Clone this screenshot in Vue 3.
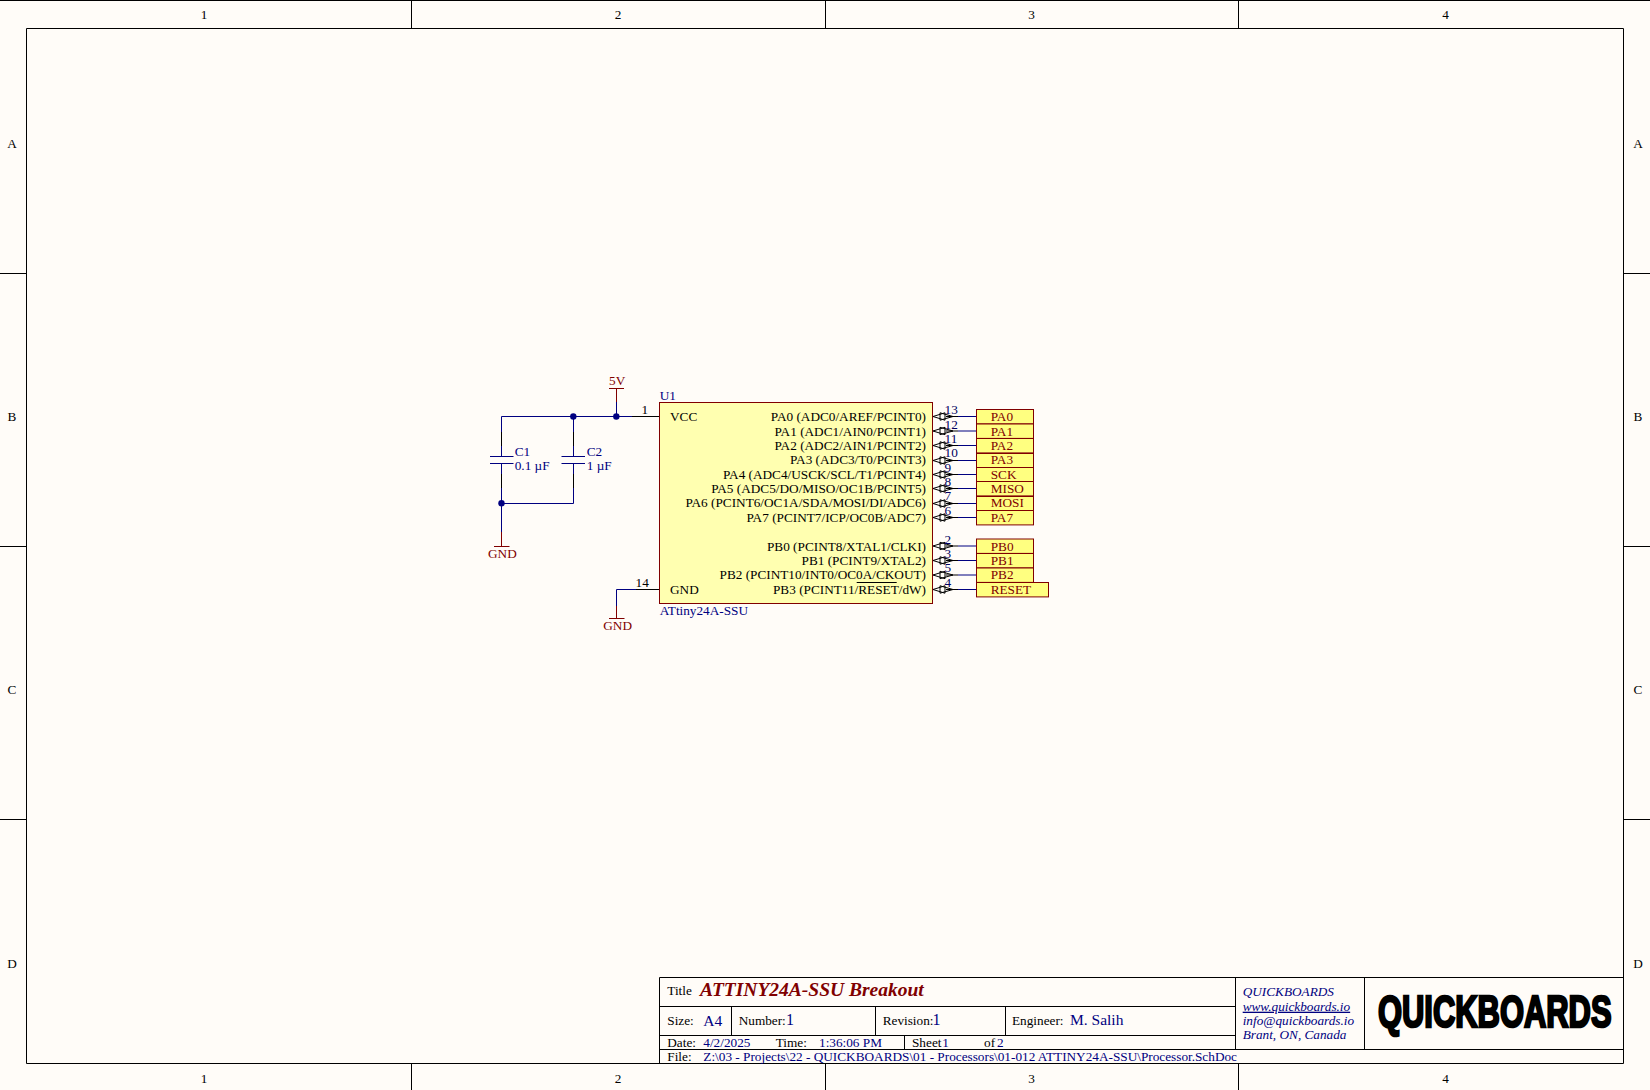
<template>
  <div class="sheet">
    <svg class="canvas" width="1650" height="1090" viewBox="0 0 1650 1090">
      <!-- sheet frame -->
      <path class="frame" d="M0 0.5H1650M26.5 28.5H1623.5V1063.5H26.5Z" />
      <path class="frame" d="M411.5 1V28M825.5 1V28M1238.5 1V28M411.5 1063V1090M825.5 1063V1090M1238.5 1063V1090" />
      <path class="frame" d="M0 273.5H26M0 546.5H26M0 819.5H26M1624 273.5H1650M1624 546.5H1650M1624 819.5H1650" />
      <g class="ref">
        <template v-for="c in cols" :key="c.n">
          <text :x="c.x" y="18.5">{{ c.n }}</text>
          <text :x="c.x" y="1082.5">{{ c.n }}</text>
        </template>
        <template v-for="r in rows" :key="r.n">
          <text x="12" :y="r.y">{{ r.n }}</text>
          <text x="1638" :y="r.y">{{ r.n }}</text>
        </template>
      </g>

      <!-- wires -->
      <path class="wire" d="M632 416.5H501.5V456.5M573.5 416.5V456.5M616.5 416.5V396M501.5 463.5V532M573.5 463.5V503.5H501.5M659 589.5H616.5V606" />
      <path class="pin" d="M501.5 432V446M573.5 432V446M501.5 474V488M573.5 474V488" />
      <path class="cap" d="M490 456.5H513.5M490 463.5H513.5M561.5 456.5H585M561.5 463.5H585" />
      <circle class="dot" cx="573.3" cy="416.5" r="3.2" />
      <circle class="dot" cx="616.3" cy="416.5" r="3.2" />
      <circle class="dot" cx="501.5" cy="503.3" r="3.2" />

      <!-- power ports -->
      <path class="power" d="M609 388.5H624M616.5 388.5V402M494 546.5H509.5M501.5 532V546.5M609 618.5H624.5M616.5 606V618.5" />
      <text class="t power-t" x="609" y="385">5V</text>
      <text class="t power-t" x="488" y="558">GND</text>
      <text class="t power-t" x="603.3" y="630">GND</text>

      <text class="t des" x="514.7" y="456">C1</text>
      <text class="t des" x="514.7" y="470">0.1 µF</text>
      <text class="t des" x="586.7" y="456">C2</text>
      <text class="t des" x="586.7" y="470">1 µF</text>

      <!-- U1 -->
      <rect class="chip" x="659.5" y="402.5" width="273" height="201" />
      <path class="pin" d="M632 416.5H659M636 589.5H659" />
      <text class="t des" x="659.7" y="400">U1</text>
      <text class="t des" x="659.7" y="615">ATtiny24A-SSU</text>
      <text class="t" x="641.5" y="414">1</text>
      <text class="t" x="635.5" y="586.5">14</text>
      <text class="t" x="670" y="421">VCC</text>
      <text class="t" x="670" y="594">GND</text>

      <g v-for="p in pins" :key="p.num">
        <path class="wire" :d="`M958 ${p.y}H977`" />
        <path class="pin" :d="`M946 ${p.y}H958`" />
        <path class="io" :d="`M933 ${p.y}L945 ${p.y - 3.7}V${p.y + 3.7}ZM953 ${p.y}L940 ${p.y - 3.7}V${p.y + 3.7}Z`" />
        <text class="t pname" x="926" :y="p.b">{{ p.name }}</text>
        <text class="t pnum" x="944.5" :y="p.b - 7">{{ p.num }}</text>
        <rect class="port" x="976.5" :y="p.y - 7" :width="p.w" height="14.4" />
        <text class="t port-t" x="990.7" :y="p.b">{{ p.port }}</text>
      </g>
      <path class="pin" d="M856.7 582.5H896.7" />

      <!-- title block -->
      <path class="frame" d="M659.5 1063V977.5H1623M659.5 1006.5H1235M659.5 1035.5H1235M659.5 1049.5H1623M731.5 1006.5V1035.5M875.5 1006.5V1035.5M1005.5 1006.5V1035.5M904.5 1035.5V1049.5M1235.5 977.5V1049.5M1364.5 977.5V1049.5" />
      <text class="t" x="667.3" y="995.3">Title</text>
      <text class="title" x="700" y="996">ATTINY24A-SSU Breakout</text>
      <text class="t" x="667.3" y="1025">Size:</text>
      <text class="val big" x="703.3" y="1025.5">A4</text>
      <text class="t" x="738.7" y="1025">Number:</text>
      <text class="val" x="786" y="1025">1</text>
      <text class="t" x="882.7" y="1025">Revision:</text>
      <text class="val" x="932.5" y="1025">1</text>
      <text class="t" x="1012" y="1025">Engineer:</text>
      <text class="val big" x="1070" y="1025">M. Salih</text>
      <text class="t" x="667.3" y="1047">Date:</text>
      <text class="t des" x="703.3" y="1047">4/2/2025</text>
      <text class="t" x="775.7" y="1047">Time:</text>
      <text class="t des" x="819" y="1047">1:36:06 PM</text>
      <text class="t" x="912" y="1047">Sheet</text>
      <text class="t des" x="942.3" y="1047">1</text>
      <text class="t" x="984" y="1047">of</text>
      <text class="t des" x="997" y="1047">2</text>
      <text class="t" x="667.3" y="1060.5">File:</text>
      <text class="t des" x="703.3" y="1060.5">Z:\03 - Projects\22 - QUICKBOARDS\01 - Processors\01-012 ATTINY24A-SSU\Processor.SchDoc</text>
      <text class="t addr" x="1242.7" y="995.7">QUICKBOARDS</text>
      <text class="t addr link" x="1242.7" y="1010.7">www.quickboards.io</text>
      <text class="t addr" x="1242.7" y="1024.6">info@quickboards.io</text>
      <text class="t addr" x="1242.7" y="1038.5">Brant, ON, Canada</text>
      <text class="logo" transform="translate(1378 1027) scale(0.687 1)">QUICKBOARDS</text>
    </svg>
  </div>
</template>

<script setup>
const cols = [
  { n: '1', x: 204 },
  { n: '2', x: 618 },
  { n: '3', x: 1031.5 },
  { n: '4', x: 1445.5 }
]
const rows = [
  { n: 'A', y: 148 },
  { n: 'B', y: 421 },
  { n: 'C', y: 694 },
  { n: 'D', y: 968 }
]
const pins = [
  { y: 416.5, b: 421, num: '13', port: 'PA0', w: 57, name: 'PA0 (ADC0/AREF/PCINT0)' },
  { y: 431, b: 436, num: '12', port: 'PA1', w: 57, name: 'PA1 (ADC1/AIN0/PCINT1)' },
  { y: 445.5, b: 450, num: '11', port: 'PA2', w: 57, name: 'PA2 (ADC2/AIN1/PCINT2)' },
  { y: 460.5, b: 464, num: '10', port: 'PA3', w: 57, name: 'PA3 (ADC3/T0/PCINT3)' },
  { y: 474.5, b: 479, num: '9', port: 'SCK', w: 57, name: 'PA4 (ADC4/USCK/SCL/T1/PCINT4)' },
  { y: 488.5, b: 493, num: '8', port: 'MISO', w: 57, name: 'PA5 (ADC5/DO/MISO/OC1B/PCINT5)' },
  { y: 503.5, b: 507, num: '7', port: 'MOSI', w: 57, name: 'PA6 (PCINT6/OC1A/SDA/MOSI/DI/ADC6)' },
  { y: 517.5, b: 522, num: '6', port: 'PA7', w: 57, name: 'PA7 (PCINT7/ICP/OC0B/ADC7)' },
  { y: 546, b: 551, num: '2', port: 'PB0', w: 57, name: 'PB0 (PCINT8/XTAL1/CLKI)' },
  { y: 560.5, b: 565, num: '3', port: 'PB1', w: 57, name: 'PB1 (PCINT9/XTAL2)' },
  { y: 575, b: 579, num: '5', port: 'PB2', w: 57, name: 'PB2 (PCINT10/INT0/OC0A/CKOUT)' },
  { y: 589.5, b: 594, num: '4', port: 'RESET', w: 72, name: 'PB3 (PCINT11/RESET/dW)' }
]
</script>

<style>
body {
  background: #fffcf8;
}
</style>

<style scoped>
.sheet {
  width: 1650px;
  height: 1090px;
  background: #fffcf8;
}
.canvas {
  display: block;
}
.canvas text {
  font-family: "Liberation Serif", "Times New Roman", serif;
  white-space: pre;
}
.frame,
.pin,
.wire,
.cap,
.power,
.io {
  fill: none;
  stroke-width: 1;
}
.frame,
.pin,
.io {
  stroke: #000;
}
.wire,
.cap {
  stroke: #000080;
}
.power {
  stroke: #800000;
}
.dot {
  fill: #000080;
}
.chip {
  fill: #ffffb0;
  stroke: #800000;
}
.port {
  fill: #ffff80;
  stroke: #800000;
}
.ref text {
  font-size: 13.25px;
  text-anchor: middle;
  fill: #000;
}
.t {
  font-size: 13.25px;
  fill: #000;
}
.pname {
  text-anchor: end;
}
.pnum {
  fill: #000060;
}
.des {
  fill: #000080;
}
.power-t,
.port-t {
  fill: #800000;
}
.val {
  font-size: 16px;
  fill: #000080;
}
.big {
  font-size: 15.5px;
}
.title {
  font-size: 19.5px;
  font-weight: bold;
  font-style: italic;
  fill: #800000;
}
.addr {
  font-style: italic;
  fill: #000080;
}
.link {
  text-decoration: underline;
}
.canvas .logo {
  font-family: "Liberation Sans", sans-serif;
  font-size: 45px;
  font-weight: bold;
  fill: #000;
  stroke: #000;
  stroke-width: 2.6px;
}
</style>
